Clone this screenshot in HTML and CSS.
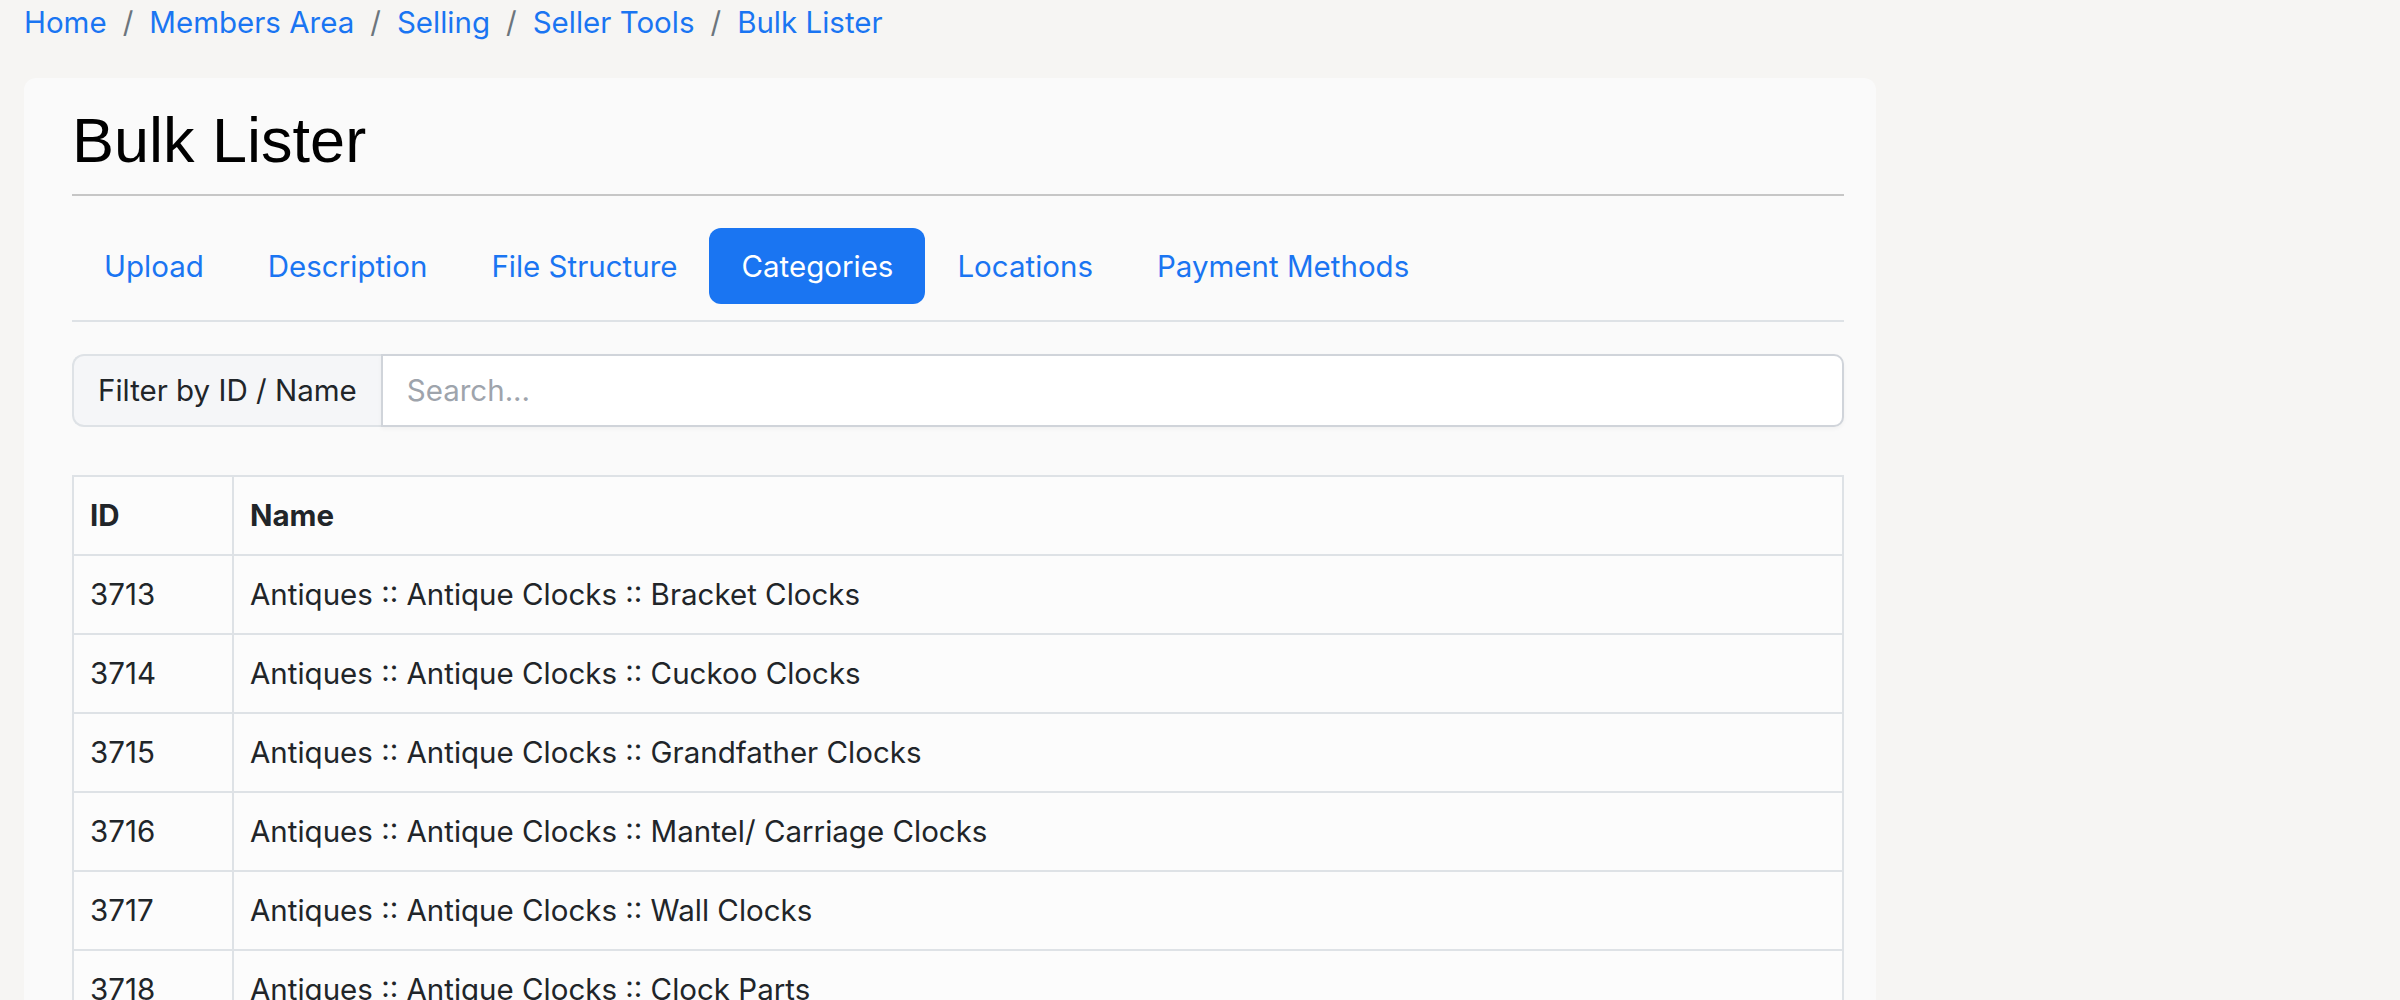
FILE: index.html
```html
<!DOCTYPE html>
<html lang="en">
<head>
<meta charset="utf-8">
<title>Bulk Lister</title>
<link rel="stylesheet" href="styles.css">
</head>
<body>
<div class="page">
  <nav class="breadcrumb">
    <a href="#">Home</a><span class="sep">/</span>
    <a href="#">Members Area</a><span class="sep">/</span>
    <a href="#">Selling</a><span class="sep">/</span>
    <a href="#">Seller Tools</a><span class="sep">/</span>
    <a href="#">Bulk Lister</a>
  </nav>
  <main class="card">
    <h1 class="title">Bulk Lister</h1>
    <hr class="rule">
    <ul class="tabs">
      <li><a class="tab" href="#">Upload</a></li>
      <li><a class="tab" href="#">Description</a></li>
      <li><a class="tab" href="#">File Structure</a></li>
      <li><a class="tab active" href="#">Categories</a></li>
      <li><a class="tab" href="#">Locations</a></li>
      <li><a class="tab" href="#">Payment Methods</a></li>
    </ul>
    <div class="filter">
      <span class="filter-label">Filter by ID / Name</span>
      <input class="filter-input" type="text" placeholder="Search...">
    </div>
    <table class="grid">
      <thead>
        <tr><th class="col-id">ID</th><th>Name</th></tr>
      </thead>
      <tbody>
        <tr><td>3713</td><td>Antiques :: Antique Clocks :: Bracket Clocks</td></tr>
        <tr><td>3714</td><td>Antiques :: Antique Clocks :: Cuckoo Clocks</td></tr>
        <tr><td>3715</td><td>Antiques :: Antique Clocks :: Grandfather Clocks</td></tr>
        <tr><td>3716</td><td>Antiques :: Antique Clocks :: Mantel/ Carriage Clocks</td></tr>
        <tr><td>3717</td><td>Antiques :: Antique Clocks :: Wall Clocks</td></tr>
        <tr><td>3718</td><td>Antiques :: Antique Clocks :: Clock Parts</td></tr>
      </tbody>
    </table>
  </main>
</div>
</body>
</html>
```

FILE: styles.css
```css
* { box-sizing: border-box; }

html, body {
  margin: 0;
  padding: 0;
  background: #f6f5f3;
}

body {
  font-family: Inter, "Noto Sans", sans-serif;
  font-size: 29.5px;
  line-height: 1.5;
  color: #212529;
}

.page {
  padding: 0 24px;
}

.breadcrumb {
  display: flex;
  align-items: baseline;
  line-height: 44px;
  margin: 0 0 34px;
}

.breadcrumb a {
  color: #1a75f2;
  text-decoration: none;
}

.breadcrumb .sep {
  color: #6c757d;
  padding: 0 16px;
}

.card {
  width: 1852px;
  background: #fafafa;
  border-radius: 12px;
  padding: 25px 32px 40px 48px;
}

.title {
  font-family: "Liberation Sans", Arial, sans-serif;
  font-weight: 400;
  font-size: 63px;
  line-height: 1.2;
  color: #000;
  margin: 0 0 15px;
}

.rule {
  border: 0;
  height: 2px;
  background: #c6c6c6;
  margin: 0 0 32px;
}

.tabs {
  display: flex;
  list-style: none;
  margin: 0;
  padding: 0 0 16px;
  border-bottom: 2px solid #dee2e6;
}

.tab {
  display: block;
  padding: 16px 32px;
  line-height: 44px;
  color: #1a75f2;
  text-decoration: none;
  border-radius: 12px;
}

.tab.active {
  background: #1a75f2;
  color: #fff;
}

.filter {
  display: flex;
  margin-top: 32px;
  height: 73px;
}

.filter-label {
  display: flex;
  align-items: center;
  padding: 0 24px;
  background: #f5f6f8;
  border: 2px solid #dee2e6;
  border-right: 0;
  border-radius: 12px 0 0 12px;
  white-space: nowrap;
  color: #212529;
}

.filter-input {
  flex: 1;
  min-width: 0;
  font: inherit;
  color: #212529;
  background: #fff;
  border: 2px solid #d0d4da;
  border-radius: 0 10px 10px 0;
  padding: 0 24px;
  box-shadow: 0 2px 4px rgba(0, 0, 0, 0.04);
  outline: none;
}

.filter-input::placeholder {
  color: #9ea4ac;
}

.grid {
  width: 100%;
  margin-top: 48px;
  border-collapse: collapse;
  background: #fcfcfc;
  border: 2px solid #dee2e6;
}

.grid th,
.grid td {
  border: 2px solid #dee2e6;
  padding: 16px;
  line-height: 45px;
  text-align: left;
  vertical-align: top;
}

.grid th {
  font-weight: 700;
}

.grid .col-id {
  width: 160px;
}
```
